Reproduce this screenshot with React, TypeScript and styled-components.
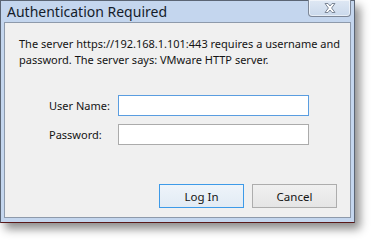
import React from "react";
import styled, { createGlobalStyle } from "styled-components";

const Global = createGlobalStyle`
  html, body { margin: 0; padding: 0; background: #ffffff; }
  body { font-family: "Noto Sans", "Open Sans", sans-serif; }
`;

const Stage = styled.div`
  width: 372px;
  height: 240px;
  background: #ffffff;
`;

const Window = styled.div`
  position: relative;
  width: 355px;
  height: 223px;
  box-sizing: border-box;
  border: 1px solid #5b6574;
  border-bottom-color: #5a1818;
  background: #c4d6ee;
  display: flex;
  flex-direction: column;
  padding: 0 3px 4px 3px;
  box-shadow: 5px 6px 9px rgba(0, 0, 0, 0.45);
`;

const TitleBar = styled.div`
  height: 21px;
  display: flex;
  align-items: flex-start;
  justify-content: space-between;
  flex: none;
`;

const Title = styled.div`
  font-family: "Noto Sans", "Open Sans", sans-serif;
  font-size: 14px;
  line-height: 20px;
  color: #141c2a;
  padding: 1px 0 0 3px;
  white-space: nowrap;
`;

const CloseButton = styled.div`
  width: 43px;
  height: 17px;
  margin-top: -1px;
  box-sizing: border-box;
  border: 1px solid #7d8797;
  border-top: none;
  border-radius: 0 0 4px 4px;
  background: linear-gradient(#dfe8f4, #cad9ec);
  box-shadow: inset 0 0 0 1px rgba(255, 255, 255, 0.55);
  display: flex;
  align-items: center;
  justify-content: center;
`;

const Client = styled.div`
  flex: 1;
  box-sizing: border-box;
  border: 1px solid #8e9aab;
  background: #f0f0f0;
  padding: 13px 13px 9px 14px;
  display: flex;
  flex-direction: column;
`;

const Message = styled.p`
  margin: 0;
  font-size: 11px;
  line-height: 16px;
  color: #141414;
  white-space: nowrap;
`;

const Form = styled.div`
  margin: 27px 0 0 30px;
  display: grid;
  grid-template-columns: 69px 191px;
  row-gap: 8px;
  align-items: center;
`;

const Label = styled.label`
  font-size: 11px;
  line-height: 16px;
  color: #141414;
`;

const Input = styled.input<{ $focused?: boolean }>`
  box-sizing: border-box;
  width: 191px;
  height: 21px;
  margin: 0;
  border: 1px solid ${(p) => (p.$focused ? "#5a9de0" : "#ababab")};
  background: #ffffff;
  outline: none;
  padding: 0 3px;
  font-size: 12px;
  font-family: inherit;
`;

const Buttons = styled.div`
  margin-top: auto;
  display: flex;
  justify-content: flex-end;
  gap: 8px;
`;

const Button = styled.button<{ $default?: boolean }>`
  box-sizing: border-box;
  width: 85px;
  height: 24px;
  margin: 0;
  padding: 0;
  border: 1px solid ${(p) => (p.$default ? "#3d9ae8" : "#adadad")};
  background: ${(p) =>
    p.$default
      ? "linear-gradient(#eef4fa, #e2ebf4)"
      : "linear-gradient(#f0f0f0, #e5e5e5)"};
  font-family: "Noto Sans", "Open Sans", sans-serif;
  font-size: 11.5px;
  color: #141414;
`;

export default function App() {
  return (
    <Stage>
      <Global />
      <Window>
        <TitleBar>
          <Title>Authentication Required</Title>
          <CloseButton>
            <svg width="16" height="12" viewBox="0 0 16 12">
              <path
                d="M3 1.5 L6 1.5 L8 4 L10 1.5 L13 1.5 L9.6 6 L13 10.5 L10 10.5 L8 8 L6 10.5 L3 10.5 L6.4 6 Z"
                fill="#ffffff"
                stroke="#7b8696"
                strokeWidth="1"
                strokeLinejoin="round"
              />
            </svg>
          </CloseButton>
        </TitleBar>
        <Client>
          <Message>
            The server https://192.168.1.101:443 requires a username and
            <br />
            password. The server says: VMware HTTP server.
          </Message>
          <Form>
            <Label htmlFor="user">User Name:</Label>
            <Input id="user" $focused />
            <Label htmlFor="pass">Password:</Label>
            <Input id="pass" type="password" />
          </Form>
          <Buttons>
            <Button $default>Log In</Button>
            <Button>Cancel</Button>
          </Buttons>
        </Client>
      </Window>
    </Stage>
  );
}
